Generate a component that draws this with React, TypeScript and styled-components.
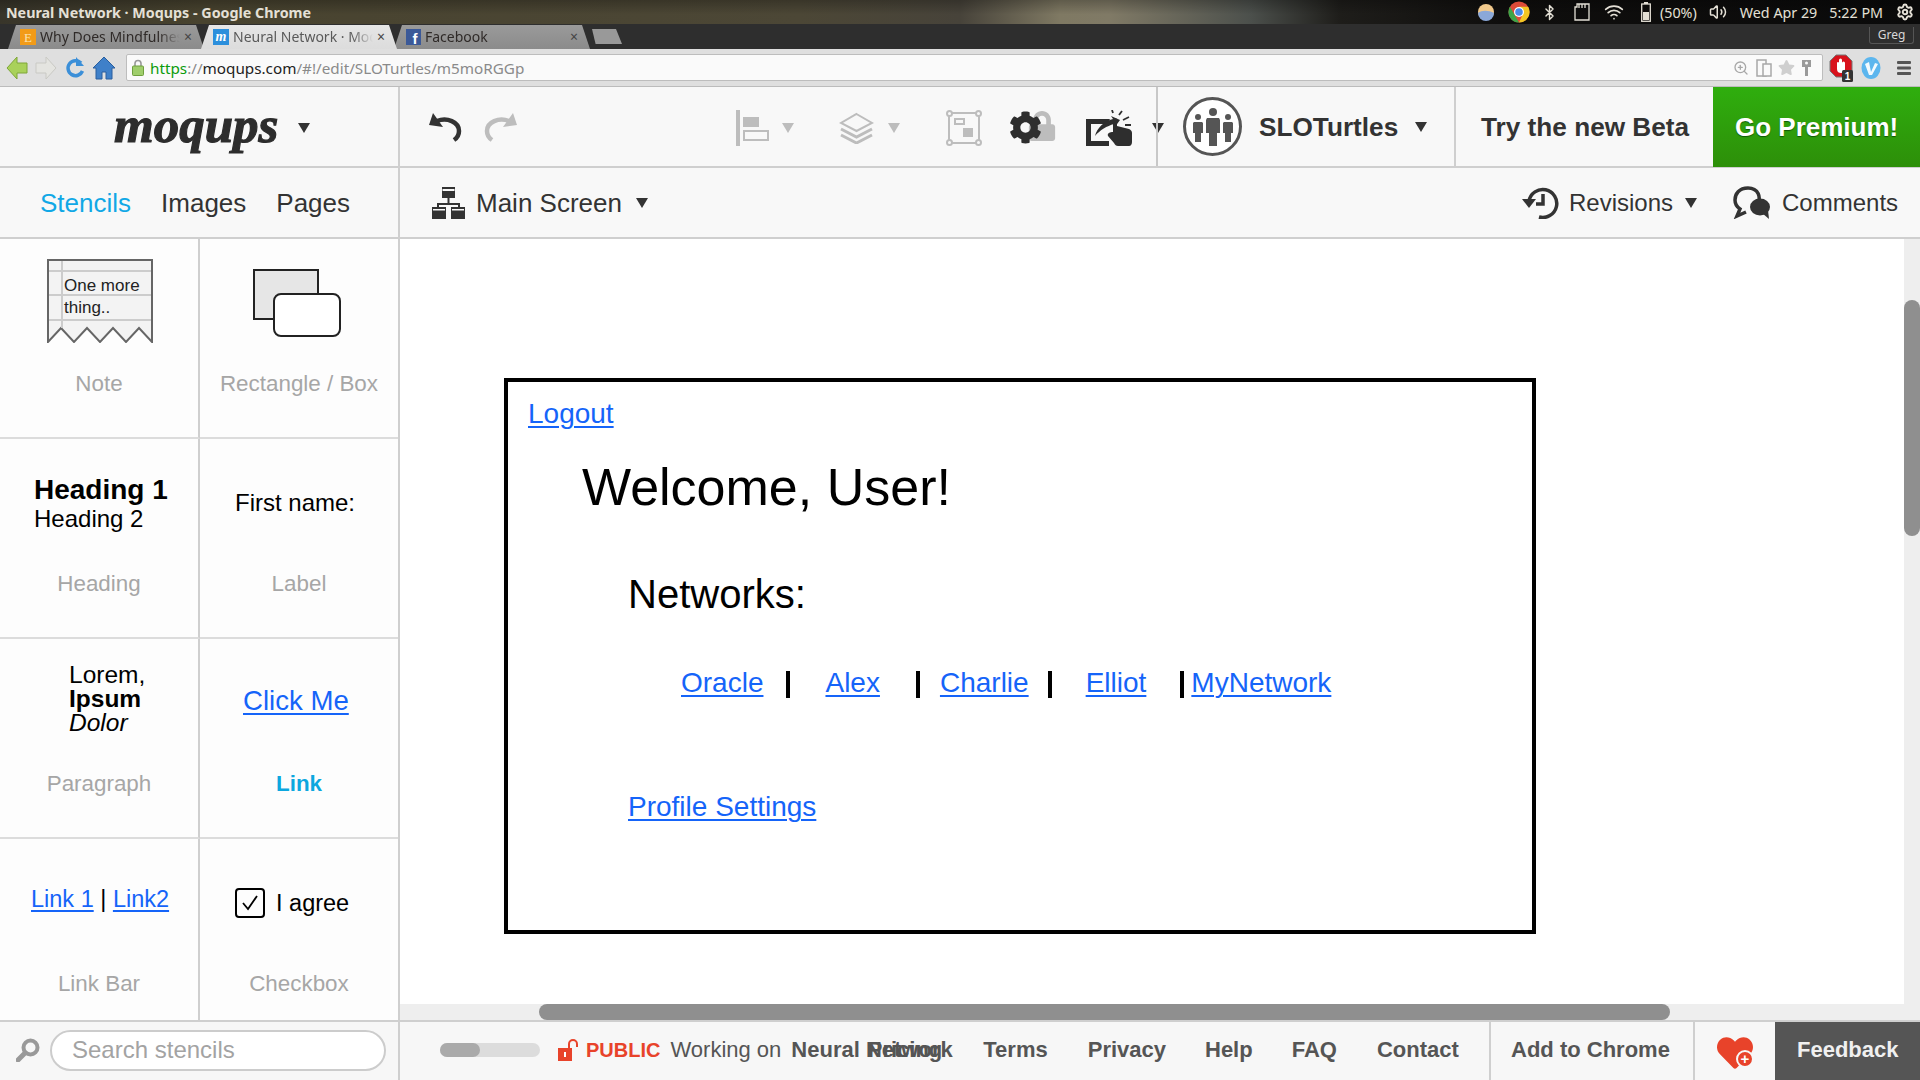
import { Fragment } from 'react'
import { Bluetooth, Settings, Volume2, Wifi, ZoomIn } from 'lucide-react'
import { FaCog, FaHeart, FaLock, FaStar } from 'react-icons/fa'
import styled, { createGlobalStyle } from 'styled-components'

const GlobalStyle = createGlobalStyle`
  html, body {
    margin: 0;
    padding: 0;
    overflow: hidden;
    background: #fff;
  }
  * {
    box-sizing: border-box;
  }
`

const ARIAL = '"Liberation Sans", Arial, sans-serif'
const UBUNTU = '"Noto Sans", "Open Sans", sans-serif'

const Page = styled.div`
  width: 1920px;
  height: 1080px;
  overflow: hidden;
  display: flex;
  flex-direction: column;
  font-family: ${ARIAL};
`

/* desktop panel */
const OsBar = styled.div`
  height: 24px;
  display: flex;
  align-items: center;
  padding: 0 6px;
  color: #e4e0d6;
  font-family: ${UBUNTU};
  font-size: 14.3px;
  background:
    linear-gradient(180deg, rgba(0, 0, 0, 0.25), rgba(0, 0, 0, 0) 60%),
    linear-gradient(90deg, #38352a 0, #48432f 200px, #4c4736 800px, #47433a 960px, #7f7963 1060px, #807a66 1110px, #4c504c 1250px, #1e1d1a 1340px, #0f0e0d 1500px, #0a0a0a 1920px);
`

const WindowTitle = styled.div`
  font-weight: 700;
  flex: 1;
`

const Tray = styled.span<{ $ml?: number }>`
  display: flex;
  align-items: center;
  margin-left: ${(p) => p.$ml ?? 0}px;
  white-space: nowrap;
`

/* browser chrome */
const TabStrip = styled.div`
  height: 25px;
  background: #2e2e2e;
  display: flex;
  align-items: flex-end;
  padding-left: 8px;
  position: relative;
`

const Tab = styled.div<{ $active?: boolean }>`
  width: 196px;
  margin-right: -3px;
  height: 24px;
  display: flex;
  align-items: center;
  padding: 0 12px 1px 12px;
  gap: 4px;
  position: relative;
  z-index: ${(p) => (p.$active ? 1 : 0)};
  clip-path: polygon(0 100%, 8px 0, calc(100% - 8px) 0, 100% 100%);
  background: ${(p) => (p.$active ? 'linear-gradient(#e6e6e6, #dcdcdc)' : 'linear-gradient(#9a9a9a, #8b8b8b)')};
  color: ${(p) => (p.$active ? '#5a5a5a' : '#2f2a28')};
  font-family: ${UBUNTU};
  font-size: 14px;
`

const TabText = styled.span`
  flex: 1;
  overflow: hidden;
  white-space: nowrap;
  -webkit-mask-image: linear-gradient(90deg, #000 85%, transparent);
  mask-image: linear-gradient(90deg, #000 85%, transparent);
`

const TabClose = styled.span`
  font-size: 14px;
  color: #444;
  line-height: 1;
`

const NewTab = styled.div`
  width: 30px;
  height: 15px;
  margin: 0 0 5px 5px;
  background: #999;
  clip-path: polygon(0 0, 80% 0, 100% 100%, 12% 100%);
`

const GregBadge = styled.div`
  position: absolute;
  right: 6px;
  top: 3px;
  width: 45px;
  height: 17px;
  border: 1px solid #555;
  border-top: none;
  border-radius: 0 0 3px 3px;
  color: #d8d8d8;
  font-family: ${UBUNTU};
  font-size: 12px;
  text-align: center;
  line-height: 16px;
`

const BrowserToolbar = styled.div`
  height: 38px;
  background: #dfdfdf;
  border-bottom: 1px solid #bcbcbc;
  display: flex;
  align-items: center;
  padding-left: 6px;
`

const NavIcon = styled.span<{ $ml?: number }>`
  display: flex;
  margin-left: ${(p) => p.$ml ?? 0}px;
`

const Omnibox = styled.div`
  margin-left: 10px;
  width: 1697px;
  height: 27px;
  background: #fafafa;
  border: 1px solid #bdbdbd;
  border-radius: 2px;
  display: flex;
  align-items: center;
  padding-left: 5px;
  font-family: ${UBUNTU};
  font-size: 15.25px;
  color: #8a8a8a;
`

const UrlScheme = styled.span`
  color: #0b9b0b;
`

const UrlHost = styled.span`
  color: #222;
`

const Url = styled.span`
  flex: 1;
  margin-left: 6px;
`

/* moqups header */
const Header = styled.div`
  height: 81px;
  background: #f8f8f8;
  border-bottom: 2px solid #cfcfcf;
  display: flex;
  align-items: stretch;
`

const LogoCell = styled.div`
  width: 400px;
  border-right: 2px solid #cfcfcf;
  display: flex;
  align-items: center;
  padding: 0 0 3px 114px;
`

const Logo = styled.span`
  font-family: "Liberation Serif", serif;
  font-style: italic;
  font-weight: 700;
  font-size: 51px;
  line-height: 1;
  color: #2d2d2d;
  -webkit-text-stroke: 1.2px #2d2d2d;
`

const Caret = styled.span<{ $ml?: number; $mt?: number; $muted?: boolean }>`
  flex: none;
  width: 0;
  height: 0;
  margin-left: ${(p) => p.$ml ?? 0}px;
  margin-top: ${(p) => p.$mt ?? 0}px;
  border-left: 6.5px solid transparent;
  border-right: 6.5px solid transparent;
  border-top: 10px solid ${(p) => (p.$muted ? '#bdbdbd' : '#333')};
`

const HeaderMain = styled.div`
  flex: 1;
  display: flex;
  align-items: center;

  & > span {
    margin-top: 2px;
  }
`

const ToolIcon = styled.span<{ $ml: number }>`
  flex: none;
  display: flex;
  margin-left: ${(p) => p.$ml}px;
  position: relative;
`

const LockBehind = styled.span`
  position: absolute;
  left: 18px;
  top: 0;
  color: #bdbdbd;
  display: flex;
`

const UserCell = styled.div`
  height: 100%;
  margin-left: -8px;
  width: 300px;
  border-left: 2px solid #c8c8c8;
  border-right: 2px solid #cfcfcf;
  display: flex;
  align-items: center;
  padding-left: 25px;
`

const Avatar = styled.span`
  flex: none;
  width: 59px;
  height: 59px;
  border-radius: 50%;
  border: 3px solid #555;
  background: #fff;
  display: flex;
  align-items: center;
  justify-content: center;
`

const TeamName = styled.span`
  margin-left: 17px;
  padding-top: 2px;
  font-size: 26.2px;
  font-weight: 700;
  color: #333;
`

const BetaCell = styled.div`
  width: 257px;
  padding: 2px 0 0 25px;
  display: flex;
  align-items: center;
  height: 100%;
  font-size: 26.2px;
  font-weight: 700;
  color: #333;
  white-space: nowrap;
`

const PremiumCell = styled.div`
  flex: 1;
  height: calc(100% + 1px);
  background: linear-gradient(#2fae0e, #2d8f09);
  display: flex;
  align-items: center;
  padding: 2px 0 0 22px;
  font-size: 26px;
  font-weight: 700;
  color: #fff;
  text-shadow: 0 1px 1px rgba(0, 60, 0, 0.7);
  white-space: nowrap;
`

/* second bar */
const SubBar = styled.div`
  height: 71px;
  background: #f8f8f8;
  border-bottom: 2px solid #cfcfcf;
  display: flex;
  align-items: stretch;
`

const PanelTabs = styled.div`
  width: 400px;
  border-right: 2px solid #cfcfcf;
  display: flex;
  align-items: center;
  padding: 2px 0 0 40px;
  gap: 30px;
  font-size: 26px;
`

const PanelTab = styled.span<{ $active?: boolean }>`
  color: ${(p) => (p.$active ? '#11a8e6' : '#333')};
`

const ScreenBar = styled.div`
  flex: 1;
  display: flex;
  align-items: center;
  color: #333;
`

const ScreenName = styled.span`
  margin-left: 11px;
  padding-top: 2px;
  font-size: 26px;
`

const BarAction = styled.span<{ $ml?: number }>`
  font-size: 24px;
  margin-left: ${(p) => p.$ml ?? 0}px;
`

/* workspace */
const Workspace = styled.div`
  flex: 1;
  display: flex;
  min-height: 0;
`

const Sidebar = styled.div`
  width: 400px;
  border-right: 2px solid #cfcfcf;
  background: #fdfdfd;
  display: grid;
  grid-template-columns: 200px 198px;
  grid-template-rows: 200px 200px 200px 181px;
`

const Cell = styled.div<{ $right?: boolean; $last?: boolean }>`
  display: flex;
  flex-direction: column;
  border-right: ${(p) => (p.$right ? 'none' : '2px solid #cfcfcf')};
  border-bottom: ${(p) => (p.$last ? 'none' : '2px solid #dcdcdc')};
  overflow: hidden;
`

const Preview = styled.div<{ $top: number; $left: number }>`
  height: 134px;
  padding: ${(p) => p.$top}px 0 0 ${(p) => p.$left}px;
  color: #000;
  font-size: 24px;
  line-height: 1;
  white-space: nowrap;
`

const StencilLabel = styled.div<{ $accent?: boolean }>`
  text-align: center;
  font-size: 22.4px;
  line-height: 1;
  color: ${(p) => (p.$accent ? '#0ca7df' : '#a6a6a6')};
  font-weight: ${(p) => (p.$accent ? 700 : 400)};
`

const HeadingOne = styled.div`
  font-size: 28px;
  font-weight: 700;
  line-height: 30px;
`

const HeadingTwo = styled.div`
  font-size: 24px;
  line-height: 28px;
`

const ParagraphLine = styled.div<{ $bold?: boolean; $italic?: boolean }>`
  font-size: 24.5px;
  line-height: 24px;
  font-weight: ${(p) => (p.$bold ? 700 : 400)};
  font-style: ${(p) => (p.$italic ? 'italic' : 'normal')};
`

const BlueLink = styled.span<{ $size?: number }>`
  color: #1564f9;
  text-decoration: underline;
  text-decoration-thickness: 2px;
  text-underline-offset: 3px;
  font-size: ${(p) => p.$size ?? 28}px;
  line-height: 1;
`

const LinkBarRow = styled.div`
  font-size: 23.5px;
`

const CheckRow = styled.div`
  display: flex;
  align-items: center;
  gap: 11px;
  font-size: 23.5px;
`

const CheckText = styled.span`
  padding-top: 2px;
`

const CheckBox = styled.span`
  width: 30px;
  height: 30px;
  border: 2px solid #000;
  border-radius: 4px;
  display: flex;
  align-items: center;
  justify-content: center;
`

/* canvas */
const Canvas = styled.div`
  flex: 1;
  position: relative;
  background: #fff;
  padding: 139px 0 0 104px;
  overflow: hidden;
`

const Frame = styled.div`
  width: 1032px;
  height: 556px;
  border: 4px solid #000;
  padding: 18px 0 0 20px;
  color: #000;
`

const WelcomeTitle = styled.div`
  font-size: 52px;
  line-height: 1;
  margin: 33px 0 0 54px;
`

const NetworksTitle = styled.div`
  font-size: 40px;
  line-height: 1;
  margin: 61px 0 0 100px;
`

const NetworkRow = styled.div`
  display: flex;
  align-items: flex-start;
  margin: 55px 0 0 153px;
`

const NetworkLink = styled(BlueLink)<{ $ml: number }>`
  margin-left: ${(p) => p.$ml}px;
`

const Pipe = styled.span<{ $ml: number }>`
  flex: none;
  width: 4px;
  height: 27px;
  margin: 2px 0 0 ${(p) => p.$ml}px;
  background: #000;
`

const ProfileRow = styled.div`
  margin: 95px 0 0 100px;
`

const TrackRight = styled.div`
  position: absolute;
  top: 0;
  right: 0;
  bottom: 0;
  width: 16px;
  background: #eee;
`

const ThumbRight = styled.div`
  position: absolute;
  top: 61px;
  left: 0;
  width: 16px;
  height: 236px;
  background: #8f8f8f;
  border-radius: 8px;
`

const TrackBottom = styled.div`
  position: absolute;
  left: 0;
  right: 0;
  bottom: 0;
  height: 16px;
  background: #eee;
`

const ThumbBottom = styled.div`
  position: absolute;
  left: 139px;
  top: 0;
  width: 1131px;
  height: 16px;
  background: #8f8f8f;
  border-radius: 8px;
`

/* footer */
const Footer = styled.div`
  height: 60px;
  background: #f7f7f7;
  border-top: 2px solid #cfcfcf;
  display: flex;
  align-items: stretch;
  color: #555;
  font-size: 22px;
`

const SearchCell = styled.div`
  width: 400px;
  border-right: 2px solid #cfcfcf;
  display: flex;
  align-items: center;
  padding: 0 0 2px 16px;
`

const SearchField = styled.div`
  margin-left: 10px;
  width: 336px;
  height: 41px;
  border: 2px solid #ccc;
  border-radius: 21px;
  background: #fff;
  display: flex;
  align-items: center;
  padding-left: 20px;
  font-size: 24px;
  color: #a3a3a3;
`

const FootMain = styled.div`
  flex: 1;
  display: flex;
  align-items: center;
  padding: 0 0 2px 40px;
  white-space: nowrap;
`

const Toggle = styled.span`
  flex: none;
  width: 100px;
  height: 14px;
  border-radius: 7px;
  background: #dcdcdc;
  display: flex;
`

const ToggleKnob = styled.span`
  width: 40px;
  border-radius: 7px;
  background: #aaa;
`

const PublicTag = styled.span`
  margin-left: 7px;
  color: #e8432a;
  font-size: 20px;
  font-weight: 700;
`

const Working = styled.span`
  margin-left: 10px;
`

const FootLink = styled.span<{ $ml: number }>`
  font-weight: 700;
  margin-left: ${(p) => p.$ml}px;
`

const ChromeCell = styled.div`
  flex: none;
  width: 206px;
  border-left: 2px solid #cfcfcf;
  border-right: 2px solid #cfcfcf;
  display: flex;
  align-items: center;
  padding: 0 0 2px 20px;
  font-weight: 700;
  white-space: nowrap;
`

const HeartCell = styled.div`
  flex: none;
  width: 80px;
  display: flex;
  align-items: center;
  padding: 3px 0 0 22px;
  position: relative;
`

const HeartPlus = styled.span`
  position: absolute;
  left: 41px;
  top: 28px;
  width: 18px;
  height: 18px;
  border-radius: 50%;
  border: 2px solid #f7f7f7;
  background: #e8432a;
  color: #fff;
  font-size: 15px;
  font-weight: 700;
  line-height: 13px;
  text-align: center;
`

const FeedbackCell = styled.div`
  flex: none;
  width: 145px;
  background: #555;
  color: #f0f0f0;
  display: flex;
  align-items: center;
  padding: 0 0 2px 22px;
  font-weight: 700;
`

const ChromeLogo = () => (
  <svg width="22" height="22" viewBox="0 0 22 22">
    <circle cx="11" cy="11" r="10.5" fill="#dd4b39" />
    <path d="M11 21.5A10.5 10.5 0 0 1 1.9 5.7L7 14.5l4 7z" fill="#3da447" />
    <path d="M11 21.5A10.5 10.5 0 0 0 20.1 5.7H11l4 7z" fill="#f3c623" />
    <circle cx="11" cy="11" r="5" fill="#fff" />
    <circle cx="11" cy="11" r="3.8" fill="#4a8be8" />
  </svg>
)

const BackArrow = ({ color, edge }: { color: string; edge: string }) => (
  <svg width="22" height="26" viewBox="0 0 22 26">
    <path d="M1 13 11 2v6h10v10H11v6z" fill={color} stroke={edge} strokeWidth="1" />
  </svg>
)

const ForwardArrow = () => (
  <svg width="22" height="26" viewBox="0 0 22 26">
    <path d="M21 13 11 2v6H1v10h10v6z" fill="#e4e4e0" stroke="#c9c9c4" strokeWidth="1" />
  </svg>
)

const Reload = () => (
  <svg width="20" height="24" viewBox="0 0 20 24" fill="none">
    <path d="M16 7A7.5 7.5 0 1 0 17.5 15" stroke="#3b8fd8" strokeWidth="3.5" />
    <path d="M11 1v9h8z" fill="#3b8fd8" />
  </svg>
)

const Home = () => (
  <svg width="24" height="24" viewBox="0 0 24 24">
    <path d="M12 1 1 12h3v11h6v-7h4v7h6V12h3z" fill="#3f80c9" stroke="#2a5f9e" strokeWidth="1" />
  </svg>
)

const PadLock = () => (
  <svg width="12" height="17" viewBox="0 0 12 17" fill="none">
    <path d="M3 8V4.500a3 3 0 0 1 6 0V8" stroke="#999" strokeWidth="1.600" />
    <rect x="0.500" y="7" width="11" height="9.500" rx="1" fill="#9fce6b" stroke="#6f9f3e" />
  </svg>
)

const DeviceIcon = () => (
  <svg width="16" height="18" viewBox="0 0 16 18" fill="none" stroke="#a8a8a8" strokeWidth="1.500">
    <rect x="1" y="1" width="9" height="16" />
    <rect x="7" y="5" width="8" height="12" fill="#fafafa" />
  </svg>
)

const KeyIcon = () => (
  <svg width="11" height="18" viewBox="0 0 11 18">
    <path d="M1 1h9v7H7v9H4V8H1z" fill="#9a9a9a" />
    <circle cx="5.500" cy="4" r="1.500" fill="#fafafa" />
  </svg>
)

const AdBlock = () => (
  <svg width="24" height="28" viewBox="0 0 24 28">
    <path d="M7 1h10l6 6v10l-6 6H7l-6-6V7z" fill="#d8121c" stroke="#777" strokeWidth="1" />
    <path d="M8 9a1 1 0 0 1 2 0V6a1 1 0 0 1 3 0v3a1 1 0 0 1 3 0v6c0 3-2 4-4 4s-4-1-4-4z" fill="#fff" />
    <rect x="13" y="16" width="11" height="12" rx="1.500" fill="#333" />
    <text x="18.500" y="26" fill="#fff" fontSize="10" fontWeight="700" fontFamily="Liberation Sans" textAnchor="middle">1</text>
  </svg>
)

const VimeoBadge = () => (
  <svg width="20" height="24" viewBox="0 0 20 24">
    <ellipse cx="10" cy="12" rx="9.500" ry="11" fill="#5cb6ee" />
    <path d="M4 8 8 6l2 10 4-9 3 1-6 11H8z" fill="#f2fafe" />
  </svg>
)

const Hamburger = () => (
  <svg width="14" height="14" viewBox="0 0 14 14" fill="#555">
    <rect width="14" height="3" rx="1" />
    <rect y="5.500" width="14" height="3" rx="1" />
    <rect y="11" width="14" height="3" rx="1" />
  </svg>
)

const SdCard = () => (
  <svg width="16" height="18" viewBox="0 0 16 18" fill="none" stroke="#e4e0d6" strokeWidth="1.300">
    <path d="M1 4h2V1h12v16H1z" />
    <path d="M5 1v4M8 1v4M11 1v4" />
  </svg>
)

const BatteryIcon = () => (
  <svg width="10" height="20" viewBox="0 0 10 20">
    <rect x="3" y="0" width="4" height="2" fill="#e4e0d6" />
    <rect x="0.700" y="2" width="8.600" height="17.300" fill="none" stroke="#e4e0d6" strokeWidth="1.300" />
    <rect x="2" y="10" width="6" height="8" fill="#e4e0d6" />
  </svg>
)

const UndoIcon = ({ color, flip }: { color: string; flip?: boolean }) => (
  <svg width="33" height="29" viewBox="0 0 33 29" fill="none" style={flip ? { transform: 'scaleX(-1)' } : undefined}>
    <path d="M8 8C18 4 30 9 30 18c0 4-2 7-5 9" stroke={color} strokeWidth="4.500" />
    <path d="M0 12 4 0l10 14z" fill={color} />
  </svg>
)

const AlignIcon = () => (
  <svg width="33" height="36" viewBox="0 0 33 36" fill="#bdbdbd">
    <rect width="4" height="36" />
    <rect x="7" y="7" width="16" height="10" />
    <rect x="8" y="21" width="24" height="9" fill="none" stroke="#bdbdbd" strokeWidth="2" />
  </svg>
)

const LayersIcon = () => (
  <svg width="35" height="32" viewBox="0 0 35 32" fill="none" stroke="#bdbdbd" strokeWidth="3">
    <path d="M17.500 2 33 11l-15.500 8L2 11z" strokeWidth="2" />
    <path d="M2 17l15.500 8L33 17" />
    <path d="M2 23l15.500 8L33 23" />
  </svg>
)

const TransformIcon = () => (
  <svg width="36" height="36" viewBox="0 0 36 36" fill="none" stroke="#bdbdbd" strokeWidth="2">
    <rect x="3" y="3" width="30" height="30" />
    <circle cx="3.500" cy="3.500" r="2.500" fill="#f8f8f8" />
    <circle cx="32.500" cy="3.500" r="2.500" fill="#f8f8f8" />
    <circle cx="3.500" cy="32.500" r="2.500" fill="#f8f8f8" />
    <circle cx="32.500" cy="32.500" r="2.500" fill="#f8f8f8" />
    <rect x="9" y="9" width="9" height="5" />
    <rect x="17" y="18" width="10" height="9" fill="#bdbdbd" stroke="none" />
  </svg>
)

const ShareHandIcon = () => (
  <svg width="46" height="36" viewBox="0 0 46 36">
    <path d="M0 9h24l-3 5H5v17h18v5H0z" fill="#2e2e2e" />
    <path d="M9 26c2-8 9-15 18-17l-2-3 9 4-5 7-1-3c-7 2-14 6-19 12z" fill="#2e2e2e" />
    <path d="M27 22V10a2 2 0 0 1 4 0v6l12 3c2 1 3 2 3 4v9c0 2-1 4-3 4H32c-2 0-3-1-4-3l-6-7c-1-3 2-4 5-4z" fill="#2e2e2e" />
    <path d="M27 3 26 0M33 5l3-4M37 10l6-3M39 15h6" stroke="#2e2e2e" strokeWidth="1.800" />
  </svg>
)

const TeamIcon = () => (
  <svg width="42" height="38" viewBox="0 0 42 38" fill="#555">
    <circle cx="21" cy="4" r="4" />
    <path d="M15 10h12l1 2v13h-3v13h-8V25h-3V12z" />
    <circle cx="6" cy="9" r="3" />
    <path d="M2 14h8l1 1v10H9v9H3v-9H1V15z" />
    <circle cx="36" cy="9" r="3" />
    <path d="M32 14h8l1 1v10h-2v9h-6v-9h-2V15z" />
  </svg>
)

const SiteMapIcon = () => (
  <svg width="33" height="32" viewBox="0 0 33 32" fill="#333">
    <rect x="10" y="0" width="13" height="11" />
    <rect x="10.500" y="2" width="12" height="2" fill="#f8f8f8" />
    <path d="M15.500 11h2v5H28v4h-2v-2H7v2H5v-4h10.500z" />
    <rect x="0" y="20" width="14" height="12" />
    <rect x="1" y="22" width="12" height="1.500" fill="#f8f8f8" />
    <rect x="19" y="20" width="14" height="12" />
    <rect x="20" y="22" width="12" height="1.500" fill="#f8f8f8" />
  </svg>
)

const RevisionsIcon = () => (
  <svg width="37" height="33" viewBox="0 0 37 33" fill="none">
    <path d="M7 15a14 14 0 1 1 10 16" stroke="#333" strokeWidth="3.500" />
    <path d="M0 13h14l-7 9z" fill="#333" />
    <path d="M21 8v10h-7" stroke="#333" strokeWidth="3.500" />
  </svg>
)

const CommentsIcon = () => (
  <svg width="37" height="33" viewBox="0 0 37 33" fill="none">
    <path d="M24 19.500C29 11 25 2 15 2 6 2 2 8 2 14c0 4 2 7 5 9l-3 7 9-4" stroke="#333" strokeWidth="3.500" />
    <ellipse cx="27" cy="21" rx="10" ry="8.500" fill="#333" />
    <path d="M29 27l7 6-1-9z" fill="#333" />
  </svg>
)

const MagnifierIcon = () => (
  <svg width="24" height="24" viewBox="0 0 24 24" fill="none" stroke="#999">
    <circle cx="14.500" cy="9.500" r="7" strokeWidth="4" />
    <path d="M9 15 2 22" strokeWidth="5" strokeLinecap="round" />
  </svg>
)

const OpenLockIcon = () => (
  <svg width="21" height="22" viewBox="0 0 21 22" fill="none">
    <path d="M11 10V5a4 4 0 0 1 8 0v3" stroke="#e8432a" strokeWidth="2" />
    <rect x="0" y="9" width="14" height="13" fill="#e8432a" />
    <rect x="6" y="13" width="2" height="5" fill="#fff" />
  </svg>
)

const NoteThumb = () => (
  <svg width="106" height="84" viewBox="0 0 106 84">
    <path d="M1 1h104v82L92 69 79 83 66 69 53 83 40 69 27 83 14 69 1 83z" fill="#f3f3f3" stroke="#666" strokeWidth="2" />
    <path d="M15 2v67M2 12h102M2 36h102M2 61h102" stroke="#ccc" strokeWidth="2" />
    <text x="17" y="32" fontFamily="Liberation Sans" fontSize="17" fill="#222">One more</text>
    <text x="17" y="54" fontFamily="Liberation Sans" fontSize="17" fill="#222">thing..</text>
  </svg>
)

const BoxThumb = () => (
  <svg width="90" height="70" viewBox="0 0 90 70">
    <rect x="1" y="1" width="64" height="49" fill="#e6e6e6" stroke="#222" strokeWidth="2" />
    <rect x="21" y="25" width="66" height="42" rx="7" fill="#fff" stroke="#222" strokeWidth="2" />
  </svg>
)

const Check = () => (
  <svg width="20" height="18" viewBox="0 0 20 18" fill="none">
    <path d="M3 9l5 6L17 2" stroke="#000" strokeWidth="1.800" />
  </svg>
)

const networkRow = [
  { name: 'Oracle', before: 0, pipe: 23 },
  { name: 'Alex', before: 35, pipe: 36 },
  { name: 'Charlie', before: 20, pipe: 19 },
  { name: 'Elliot', before: 34, pipe: 34 },
  { name: 'MyNetwork', before: 7, pipe: 0 },
]

const footLinks = [
  { name: 'Neural Network', ml: 10 },
  { name: 'Pricing', ml: -85 },
  { name: 'Terms', ml: 41 },
  { name: 'Privacy', ml: 40 },
  { name: 'Help', ml: 39 },
  { name: 'FAQ', ml: 39 },
  { name: 'Contact', ml: 40 },
]

export default function App() {
  return (
    <Page>
      <GlobalStyle />
      <OsBar>
        <WindowTitle>Neural Network · Moqups - Google Chrome</WindowTitle>
        <Tray>
          <svg width="16" height="18" viewBox="0 0 16 18">
            <circle cx="8" cy="9" r="8" fill="#f1c98c" />
            <path d="M0 10c4-3 10-3 16 0a8 8 0 0 1-16 0z" fill="#8ba8d8" />
          </svg>
        </Tray>
        <Tray $ml={14}>
          <ChromeLogo />
        </Tray>
        <Tray $ml={11}>
          <Bluetooth size={17} color="#e4e0d6" />
        </Tray>
        <Tray $ml={16}>
          <SdCard />
        </Tray>
        <Tray $ml={14}>
          <Wifi size={20} color="#e4e0d6" />
        </Tray>
        <Tray $ml={17}>
          <BatteryIcon />
        </Tray>
        <Tray $ml={9}>(50%)</Tray>
        <Tray $ml={12}>
          <Volume2 size={18} color="#e4e0d6" />
        </Tray>
        <Tray $ml={13}>Wed Apr 29</Tray>
        <Tray $ml={12}>5:22 PM</Tray>
        <Tray $ml={13}>
          <Settings size={18} color="#e4e0d6" strokeWidth={2.6} />
        </Tray>
      </OsBar>

      <TabStrip>
        <Tab>
          <svg width="16" height="16" viewBox="0 0 16 16">
            <rect width="16" height="16" fill="#f29b18" />
            <text x="8" y="13" fontFamily="Liberation Serif" fontSize="13" fill="#fbe3b0" textAnchor="middle">E</text>
          </svg>
          <TabText>Why Does Mindfulness</TabText>
          <TabClose>×</TabClose>
        </Tab>
        <Tab $active>
          <svg width="16" height="16" viewBox="0 0 16 16">
            <rect width="16" height="16" fill="#2c8fdc" />
            <text x="8" y="12" fontFamily="Liberation Serif" fontStyle="italic" fontWeight="700" fontSize="14" fill="#fff" textAnchor="middle">m</text>
          </svg>
          <TabText>Neural Network · Moqups</TabText>
          <TabClose>×</TabClose>
        </Tab>
        <Tab>
          <svg width="15" height="16" viewBox="0 0 15 16">
            <rect width="15" height="16" fill="#3b5998" />
            <text x="9" y="15" fontFamily="Liberation Sans" fontWeight="700" fontSize="15" fill="#fff" textAnchor="middle">f</text>
          </svg>
          <TabText>Facebook</TabText>
          <TabClose>×</TabClose>
        </Tab>
        <NewTab />
        <GregBadge>Greg</GregBadge>
      </TabStrip>

      <BrowserToolbar>
        <BackArrow color="#a9d15a" edge="#7ea638" />
        <NavIcon $ml={7}>
          <ForwardArrow />
        </NavIcon>
        <NavIcon $ml={8}>
          <Reload />
        </NavIcon>
        <NavIcon $ml={7}>
          <Home />
        </NavIcon>
        <Omnibox>
          <PadLock />
          <Url>
            <UrlScheme>https</UrlScheme>://<UrlHost>moqups.com</UrlHost>/#!/edit/SLOTurtles/m5moRGGp
          </Url>
          <ZoomIn size={16} color="#a8a8a8" />
          <NavIcon $ml={7}>
            <DeviceIcon />
          </NavIcon>
          <NavIcon $ml={6}>
            <FaStar size={17} color="#cfcfcf" />
          </NavIcon>
          <NavIcon $ml={6}>
            <KeyIcon />
          </NavIcon>
          <NavIcon $ml={10} />
        </Omnibox>
        <NavIcon $ml={6}>
          <AdBlock />
        </NavIcon>
        <NavIcon $ml={8}>
          <VimeoBadge />
        </NavIcon>
        <NavIcon $ml={16}>
          <Hamburger />
        </NavIcon>
      </BrowserToolbar>

      <Header>
        <LogoCell>
          <Logo>moqups</Logo>
          <Caret $ml={20} $mt={6} />
        </LogoCell>
        <HeaderMain>
          <ToolIcon $ml={29}>
            <UndoIcon color="#333" />
          </ToolIcon>
          <ToolIcon $ml={22}>
            <UndoIcon color="#bdbdbd" flip />
          </ToolIcon>
          <ToolIcon $ml={219}>
            <AlignIcon />
          </ToolIcon>
          <Caret $ml={13} $muted />
          <ToolIcon $ml={45}>
            <LayersIcon />
          </ToolIcon>
          <Caret $ml={14} $muted />
          <ToolIcon $ml={46}>
            <TransformIcon />
          </ToolIcon>
          <ToolIcon $ml={27}>
            <FaCog size={33} color="#2e2e2e" style={{ position: 'relative', zIndex: 1 }} />
            <LockBehind>
              <FaLock size={30} />
            </LockBehind>
          </ToolIcon>
          <ToolIcon $ml={44}>
            <ShareHandIcon />
          </ToolIcon>
          <Caret $ml={20} />
          <UserCell>
            <Avatar>
              <TeamIcon />
            </Avatar>
            <TeamName>SLOTurtles</TeamName>
            <Caret $ml={17} />
          </UserCell>
          <BetaCell>Try the new Beta</BetaCell>
          <PremiumCell>Go Premium!</PremiumCell>
        </HeaderMain>
      </Header>

      <SubBar>
        <PanelTabs>
          <PanelTab $active>Stencils</PanelTab>
          <PanelTab>Images</PanelTab>
          <PanelTab>Pages</PanelTab>
        </PanelTabs>
        <ScreenBar>
          <ToolIcon $ml={32}>
            <SiteMapIcon />
          </ToolIcon>
          <ScreenName>Main Screen</ScreenName>
          <Caret $ml={14} />
          <ToolIcon $ml={874}>
            <RevisionsIcon />
          </ToolIcon>
          <BarAction $ml={10}>Revisions</BarAction>
          <Caret $ml={12} />
          <ToolIcon $ml={36}>
            <CommentsIcon />
          </ToolIcon>
          <BarAction $ml={12}>Comments</BarAction>
        </ScreenBar>
      </SubBar>

      <Workspace>
        <Sidebar>
          <Cell>
            <Preview $top={20} $left={47}>
              <NoteThumb />
            </Preview>
            <StencilLabel>Note</StencilLabel>
          </Cell>
          <Cell $right>
            <Preview $top={30} $left={53}>
              <BoxThumb />
            </Preview>
            <StencilLabel>Rectangle / Box</StencilLabel>
          </Cell>
          <Cell>
            <Preview $top={36} $left={34}>
              <HeadingOne>Heading 1</HeadingOne>
              <HeadingTwo>Heading 2</HeadingTwo>
            </Preview>
            <StencilLabel>Heading</StencilLabel>
          </Cell>
          <Cell $right>
            <Preview $top={52} $left={35}>
              First name:
            </Preview>
            <StencilLabel>Label</StencilLabel>
          </Cell>
          <Cell>
            <Preview $top={24} $left={69}>
              <ParagraphLine>Lorem,</ParagraphLine>
              <ParagraphLine $bold>Ipsum</ParagraphLine>
              <ParagraphLine $italic>Dolor</ParagraphLine>
            </Preview>
            <StencilLabel>Paragraph</StencilLabel>
          </Cell>
          <Cell $right>
            <Preview $top={48} $left={43}>
              <BlueLink $size={27.6}>Click Me</BlueLink>
            </Preview>
            <StencilLabel $accent>Link</StencilLabel>
          </Cell>
          <Cell $last>
            <Preview $top={49} $left={31}>
              <LinkBarRow>
                <BlueLink $size={23.5}>Link 1</BlueLink> | <BlueLink $size={23.5}>Link2</BlueLink>
              </LinkBarRow>
            </Preview>
            <StencilLabel>Link Bar</StencilLabel>
          </Cell>
          <Cell $right $last>
            <Preview $top={49} $left={35}>
              <CheckRow>
                <CheckBox>
                  <Check />
                </CheckBox>
                <CheckText>I agree</CheckText>
              </CheckRow>
            </Preview>
            <StencilLabel>Checkbox</StencilLabel>
          </Cell>
        </Sidebar>

        <Canvas>
          <Frame>
            <BlueLink>Logout</BlueLink>
            <WelcomeTitle>Welcome, User!</WelcomeTitle>
            <NetworksTitle>Networks:</NetworksTitle>
            <NetworkRow>
              {networkRow.map((n) => (
                <Fragment key={n.name}>
                  <NetworkLink $ml={n.before}>{n.name}</NetworkLink>
                  {n.pipe > 0 && <Pipe $ml={n.pipe} />}
                </Fragment>
              ))}
            </NetworkRow>
            <ProfileRow>
              <BlueLink>Profile Settings</BlueLink>
            </ProfileRow>
          </Frame>
          <TrackRight>
            <ThumbRight />
          </TrackRight>
          <TrackBottom>
            <ThumbBottom />
          </TrackBottom>
        </Canvas>
      </Workspace>

      <Footer>
        <SearchCell>
          <MagnifierIcon />
          <SearchField>Search stencils</SearchField>
        </SearchCell>
        <FootMain>
          <Toggle>
            <ToggleKnob />
          </Toggle>
          <ToolIcon $ml={18}>
            <OpenLockIcon />
          </ToolIcon>
          <PublicTag>PUBLIC</PublicTag>
          <Working>Working on</Working>
          {footLinks.map((l) => (
            <FootLink key={l.name} $ml={l.ml}>
              {l.name}
            </FootLink>
          ))}
        </FootMain>
        <ChromeCell>Add to Chrome</ChromeCell>
        <HeartCell>
          <FaHeart size={36} color="#e8432a" />
          <HeartPlus>+</HeartPlus>
        </HeartCell>
        <FeedbackCell>Feedback</FeedbackCell>
      </Footer>
    </Page>
  )
}
